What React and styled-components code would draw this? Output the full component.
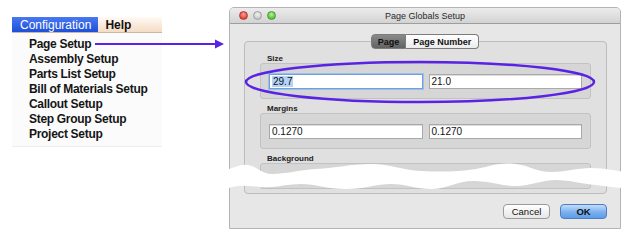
import React from 'react';
import styled, { createGlobalStyle } from 'styled-components';

const GlobalStyle = createGlobalStyle`
  body {
    margin: 0;
    background: #fff;
    font-family: "Liberation Sans", Arial, sans-serif;
  }
`

const Page = styled.div`
  position: relative;
  width: 640px;
  height: 240px;
  display: flex;
  align-items: flex-start;
  overflow: hidden;
`

const MenuArea = styled.div`
  margin: 17px 0 0 12px;
  width: 150px;
`
const MenuBar = styled.div`
  display: flex;
  height: 16px;
  border-bottom: 1px solid #c9b8a6;
  box-sizing: border-box;
`
const MenuTitle = styled.div`
  display: flex;
  align-items: center;
  padding: 0 ${props => props.active ? "7px 0 8px" : "7px"};
  font-size: 12px;
  font-weight: ${props => props.active ? "normal" : "bold"};
  color: ${props => props.active ? "#fff" : "#111"};
  background: ${props => props.active
    ? "linear-gradient(#4a78f2, #1d4fd8)"
    : "linear-gradient(#fffaf4, #f4dcc4)"};
  flex: ${props => props.active ? "none" : "1"};
`
const Dropdown = styled.ul`
  list-style: none;
  margin: 0;
  padding: 4px 0 4px 17px;
  background: #fbfbfb;
  border-bottom: 1px solid #eee;
`
const MenuItem = styled.li`
  height: 15px;
  line-height: 15px;
  font-size: 12px;
  font-weight: bold;
  letter-spacing: -0.3px;
  color: #151515;
`

const Arrow = styled.svg`
  position: absolute;
  left: 93px;
  top: 38px;
`

const Window = styled.div`
  position: relative;
  margin: 7px 0 0 67px;
  width: 392px;
  height: 222px;
  box-sizing: border-box;
  background: #e7e7e7;
  border: 1px solid #b4b4b4;
  border-radius: 5px 5px 0 0;
  display: flex;
  flex-direction: column;
`
const TitleBar = styled.div`
  height: 15px;
  display: grid;
  grid-template-columns: 1fr auto 1fr;
  align-items: center;
  padding: 0 9px;
  background: linear-gradient(#ececec, #d3d3d3);
  border-bottom: 1px solid #9e9e9e;
  border-radius: 4px 4px 0 0;
  font-size: 9px;
  color: #2a2a2a;
`
const Lights = styled.div`
  display: flex;
  gap: 5px;
`
const Light = styled.span`
  width: 9px;
  height: 9px;
  border-radius: 50%;
  box-sizing: border-box;
  border: 1px solid ${props => props.edge};
  background: radial-gradient(circle at 50% 35%, ${props => props.hi}, ${props => props.color} 70%);
`
const Content = styled.div`
  flex: 1;
  display: flex;
  flex-direction: column;
  padding-top: 10px;
`
const Tabs = styled.div`
  display: flex;
  justify-content: center;
  margin-bottom: -8px;
  position: relative;
  z-index: 1;
`
const Tab = styled.div`
  height: 15px;
  box-sizing: border-box;
  padding: 0 ${props => props.selected ? "6px" : "7px"};
  display: flex;
  align-items: center;
  font-size: 9px;
  font-weight: bold;
  color: #111;
  border: 1px solid #7c7c7c;
  border-left-width: ${props => props.selected ? "1px" : "0"};
  border-radius: ${props => props.selected ? "4px 0 0 4px" : "0 4px 4px 0"};
  background: ${props => props.selected
    ? "linear-gradient(#8a8a8a, #626262)"
    : "linear-gradient(#ffffff, #ececec)"};
`
const Group = styled.div`
  margin: 0 13px 0 14px;
  height: 153px;
  box-sizing: border-box;
  border: 1px solid #bcbcbc;
  border-radius: 4px;
  background: #e0e0e0;
  padding: 12px 15px 0 15px;
  display: flex;
  flex-direction: column;
`
const Label = styled.div`
  height: 9px;
  line-height: 9px;
  margin-top: ${props => props.first ? "0" : "5px"};
  padding-left: 7px;
  font-size: 8px;
  font-weight: bold;
  color: #222;
`
const Section = styled.div`
  height: ${props => props.short ? "26px" : "36px"};
  box-sizing: border-box;
  border: 1px solid #c2c2c2;
  border-radius: 3px;
  background: #d6d6d6;
  padding: 10px 8px 0 8px;
  display: flex;
  gap: 6px;
`
const Field = styled.div`
  flex: 1;
  height: 15px;
  box-sizing: border-box;
  display: flex;
  align-items: center;
  padding-left: 2px;
  font-size: 10px;
  color: #111;
  background: #fff;
  border: 1px solid ${props => props.focused ? "#6f9fdc" : "#a9a9a9"};
  box-shadow: ${props => props.focused ? "0 0 0 1px #9cc0ec" : "inset 0 1px 0 #ddd"};
`
const Selected = styled.span`
  background: #b5d3f7;
  padding: 0 1px;
`
const Buttons = styled.div`
  display: flex;
  justify-content: flex-end;
  gap: 10px;
  margin-top: 10px;
  padding-right: 13px;
`
const Button = styled.div`
  width: 47px;
  height: 15px;
  box-sizing: border-box;
  display: flex;
  align-items: center;
  justify-content: center;
  font-size: 9.5px;
  font-weight: ${props => props.primary ? "bold" : "normal"};
  color: #111;
  border-radius: 4px;
  border: 1px solid ${props => props.primary ? "#4e7cc4" : "#9b9b9b"};
  background: ${props => props.primary
    ? "linear-gradient(#c4ddfa, #7ab0ee 55%, #5e9ce8)"
    : "linear-gradient(#ffffff, #e6e6e6)"};
`

const Ellipse = styled.svg`
  position: absolute;
  left: 12px;
  top: 50px;
`
const Tear = styled.svg`
  position: absolute;
  left: -4px;
  top: 148px;
`

const menuItems = [
  "Page Setup",
  "Assembly Setup",
  "Parts List Setup",
  "Bill of Materials Setup",
  "Callout Setup",
  "Step Group Setup",
  "Project Setup",
]

export default function App() {
  return (
    <Page>
      <GlobalStyle />
      <MenuArea>
        <MenuBar>
          <MenuTitle active>Configuration</MenuTitle>
          <MenuTitle>Help</MenuTitle>
        </MenuBar>
        <Dropdown>
          {menuItems.map(item => <MenuItem key={item}>{item}</MenuItem>)}
        </Dropdown>
      </MenuArea>

      <Arrow width="134" height="12" viewBox="0 0 134 12">
        <line x1="2" y1="6" x2="124" y2="6" stroke="#5a22e4" strokeWidth="2" />
        <polygon points="122,1.5 131,6 122,10.5" fill="#5a22e4" />
      </Arrow>

      <Window>
        <TitleBar>
          <Lights>
            <Light color="#e0443a" hi="#ff9f96" edge="#b33a30" />
            <Light color="#c9c9c9" hi="#f2f2f2" edge="#a0a0a0" />
            <Light color="#5cbf3a" hi="#b8f29a" edge="#4a9a30" />
          </Lights>
          <span>Page Globals Setup</span>
          <span />
        </TitleBar>
        <Content>
          <Tabs>
            <Tab selected>Page</Tab>
            <Tab>Page Number</Tab>
          </Tabs>
          <Group>
            <Label first>Size</Label>
            <Section>
              <Field focused><Selected>29.7</Selected></Field>
              <Field>21.0</Field>
            </Section>
            <Label>Margins</Label>
            <Section>
              <Field>0.1270</Field>
              <Field>0.1270</Field>
            </Section>
            <Label>Background</Label>
            <Section short />
          </Group>
          <Buttons>
            <Button>Cancel</Button>
            <Button primary>OK</Button>
          </Buttons>
        </Content>

        <Ellipse width="356" height="48" viewBox="0 0 356 48">
          <ellipse cx="178" cy="24" rx="174" ry="20" fill="none" stroke="#5a22e4" strokeWidth="2.5" />
        </Ellipse>

        <Tear width="400" height="40" viewBox="0 0 400 40">
          <path
            fill="#fff"
            d="M0 14 C8 12 14 8 22 9 C30 10 36 18 46 18 C60 18 72 14 90 13 C110 12 125 8 145 8 C165 8 175 14 195 15 C215 16 230 16 250 13 C265 10 275 6 290 8 C305 10 310 16 325 16 C340 16 350 12 365 12 C380 12 390 15 400 16
               L400 32 C390 32 380 30 370 29 C355 28 345 24 330 24 C315 24 305 30 290 30 C275 30 268 26 250 25 C232 24 222 33 205 33 C190 33 180 28 165 28 C150 28 140 33 120 33 C100 33 90 28 75 28 C60 28 50 32 35 31 C22 30 12 28 0 33 Z"
          />
        </Tear>
      </Window>
    </Page>
  );
}
